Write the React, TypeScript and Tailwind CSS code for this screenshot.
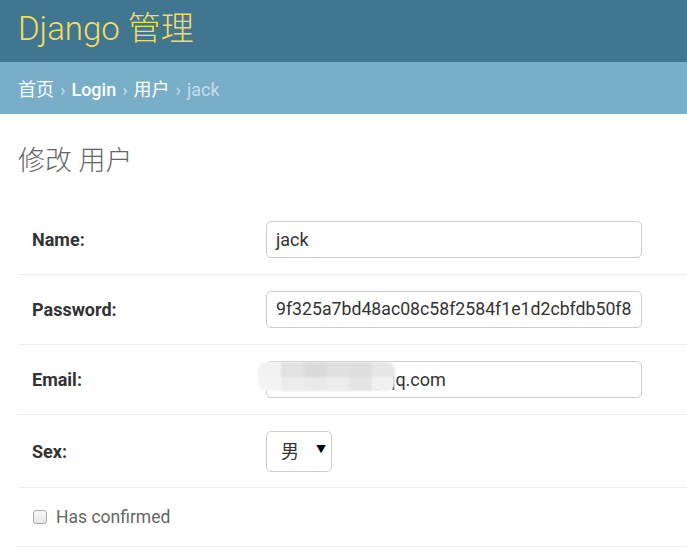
export default function App() {
  const font = { fontFamily: 'Roboto, "Noto Sans CJK SC", sans-serif' };
  return (
    <div className="w-[687px] h-[548px] overflow-hidden bg-white" style={font}>
      {/* Header */}
      <header className="h-[62px] bg-[#417690] px-[18px] flex items-center pb-[6px]">
        <h1 className="text-[33px] font-light text-[#f5dd5d] leading-none">Django 管理</h1>
      </header>

      {/* Breadcrumbs */}
      <div className="h-[52px] bg-[#79aec8] px-[18px] flex items-center text-[18px] text-white pt-[2px]">
        <span>首页</span>
        <span className="mx-[6px] text-[#c4dce8]">›</span>
        <span className="font-medium">Login</span>
        <span className="mx-[6px] text-[#c4dce8]">›</span>
        <span>用户</span>
        <span className="mx-[6px] text-[#c4dce8]">›</span>
        <span className="text-[#c4dce8]">jack</span>
      </div>

      {/* Content */}
      <main className="pl-[18px] pt-[30px]">
        <h2 className="text-[27px] font-light text-[#666] leading-[34px]">修改 用户</h2>

        <div className="mt-[27px]">
          <div className="h-[70px] flex items-center border-b border-[#eee] pl-[14px]">
            <label className="w-[234px] text-[18px] font-bold text-[#333]">Name:</label>
            <div className="w-[376px] h-[37px] border border-[#ccc] rounded-[5px] flex items-center px-[9px] text-[18px] text-[#333]">
              jack
            </div>
          </div>

          <div className="h-[70px] flex items-center border-b border-[#eee] pl-[14px]">
            <label className="w-[234px] text-[18px] font-bold text-[#333]">Password:</label>
            <div className="w-[376px] h-[37px] border border-[#ccc] rounded-[5px] flex items-center px-[9px] text-[17.7px] text-[#333] overflow-hidden whitespace-nowrap">
              9f325a7bd48ac08c58f2584f1e1d2cbfdb50f8
            </div>
          </div>

          <div className="h-[70px] flex items-center border-b border-[#eee] pl-[14px]">
            <label className="w-[234px] text-[18px] font-bold text-[#333]">Email:</label>
            <div className="relative">
              <div className="w-[376px] h-[37px] border border-[#ccc] rounded-[5px] flex items-center pl-[102px] text-[18px] text-[#333] overflow-hidden whitespace-nowrap">
                @qq.com
              </div>
              {/* blurred mosaic */}
              <div className="absolute left-[-8px] top-[1px] w-[137px] h-[29px] rounded-[8px] overflow-hidden grid grid-cols-6 grid-rows-2 blur-[1px]">
                <div className="bg-[#f2f2f2]" />
                <div className="bg-[#e2e2e2]" />
                <div className="bg-[#dadada]" />
                <div className="bg-[#e0e0e0]" />
                <div className="bg-[#dedede]" />
                <div className="bg-[#e6e6e6]" />
                <div className="bg-[#f4f4f4]" />
                <div className="bg-[#ebebeb]" />
                <div className="bg-[#e9e9e9]" />
                <div className="bg-[#ececec]" />
                <div className="bg-[#e4e4e4]" />
                <div className="bg-[#f0f0f0]" />
              </div>
            </div>
          </div>

          <div className="h-[73px] flex items-center border-b border-[#eee] pl-[14px]">
            <label className="w-[234px] text-[18px] font-bold text-[#333]">Sex:</label>
            <div className="w-[66px] h-[41px] border border-[#ccc] rounded-[5px] flex items-center pl-[14px] text-[18px] text-[#333]">
              <span>男</span>
              <span className="ml-[17px] text-[10px] text-black -mt-[3px]">▼</span>
            </div>
          </div>

          <div className="h-[59px] flex items-center border-b border-[#eee] pl-[15px]">
            <span className="w-[14px] h-[14px] border border-[#aaa] rounded-[3px] bg-gradient-to-b from-[#fafafa] to-[#e6e6e6]" />
            <span className="ml-[9px] text-[17.5px] text-[#666]">Has confirmed</span>
          </div>
        </div>
      </main>
    </div>
  );
}
